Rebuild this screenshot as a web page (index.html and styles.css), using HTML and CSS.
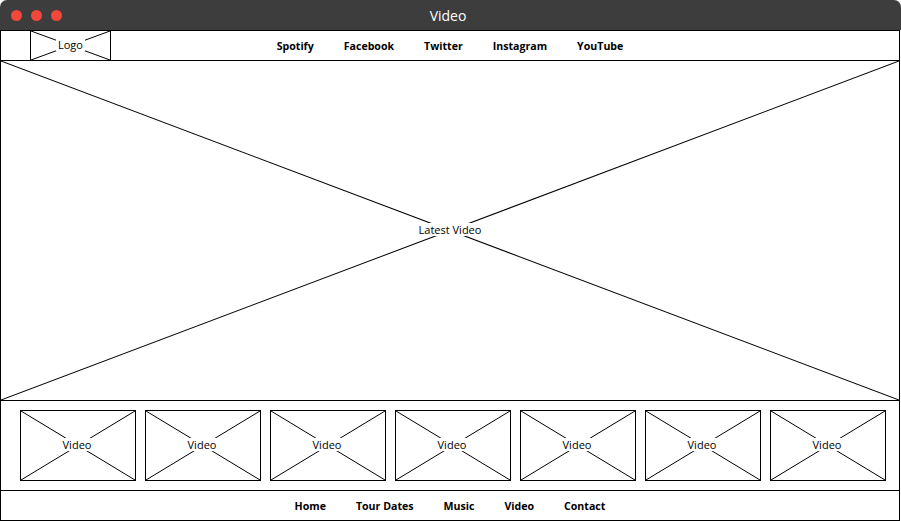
FILE: index.html
```html
<!doctype html>
<html lang="en">
<head>
	<meta charset="UTF-8">
	<title>Video</title>
	<link rel="stylesheet" href="styles.css">
</head>
<body>
<div class="titlebar">
	<div class="dots">
		<span class="dot"></span>
		<span class="dot"></span>
		<span class="dot"></span>
	</div>
	<p class="title">Video</p>
</div>
<div class="frame">
	<div class="header">
		<div class="ph logo">
			<svg class="cross" viewBox="0 0 100 100" preserveAspectRatio="none"><line x1="0" y1="0" x2="100" y2="100"/><line x1="100" y1="0" x2="0" y2="100"/></svg>
			<span class="label">Logo</span>
		</div>
		<div class="nav">
			<a>Spotify</a>
			<a>Facebook</a>
			<a>Twitter</a>
			<a>Instagram</a>
			<a>YouTube</a>
		</div>
	</div>
	<div class="ph hero">
		<svg class="cross" viewBox="0 0 100 100" preserveAspectRatio="none"><line x1="0" y1="0" x2="100" y2="100"/><line x1="100" y1="0" x2="0" y2="100"/></svg>
		<span class="label">Latest Video</span>
	</div>
	<div class="strip">
		<div class="ph thumb"><svg class="cross" viewBox="0 0 100 100" preserveAspectRatio="none"><line x1="0" y1="0" x2="100" y2="100"/><line x1="100" y1="0" x2="0" y2="100"/></svg><span class="label">Video</span></div>
		<div class="ph thumb"><svg class="cross" viewBox="0 0 100 100" preserveAspectRatio="none"><line x1="0" y1="0" x2="100" y2="100"/><line x1="100" y1="0" x2="0" y2="100"/></svg><span class="label">Video</span></div>
		<div class="ph thumb"><svg class="cross" viewBox="0 0 100 100" preserveAspectRatio="none"><line x1="0" y1="0" x2="100" y2="100"/><line x1="100" y1="0" x2="0" y2="100"/></svg><span class="label">Video</span></div>
		<div class="ph thumb"><svg class="cross" viewBox="0 0 100 100" preserveAspectRatio="none"><line x1="0" y1="0" x2="100" y2="100"/><line x1="100" y1="0" x2="0" y2="100"/></svg><span class="label">Video</span></div>
		<div class="ph thumb"><svg class="cross" viewBox="0 0 100 100" preserveAspectRatio="none"><line x1="0" y1="0" x2="100" y2="100"/><line x1="100" y1="0" x2="0" y2="100"/></svg><span class="label">Video</span></div>
		<div class="ph thumb"><svg class="cross" viewBox="0 0 100 100" preserveAspectRatio="none"><line x1="0" y1="0" x2="100" y2="100"/><line x1="100" y1="0" x2="0" y2="100"/></svg><span class="label">Video</span></div>
		<div class="ph thumb"><svg class="cross" viewBox="0 0 100 100" preserveAspectRatio="none"><line x1="0" y1="0" x2="100" y2="100"/><line x1="100" y1="0" x2="0" y2="100"/></svg><span class="label">Video</span></div>
	</div>
	<div class="footer">
		<div class="nav">
			<a>Home</a>
			<a>Tour Dates</a>
			<a>Music</a>
			<a>Video</a>
			<a>Contact</a>
		</div>
	</div>
</div>
</body>
</html>
```

FILE: styles.css
```css
*{
	box-sizing: border-box;
}
body{
	margin: 0;
	background: #fff;
	font-family: "Open Sans", "Noto Sans", sans-serif;
	color: #000;
}
.titlebar{
	height: 30px;
	background-color: #3d3d3d;
	border-radius: 7px 7px 0 0;
	display: grid;
	grid-template-columns: 1fr auto 1fr;
	align-items: center;
}
.dots{
	display: flex;
	gap: 9px;
	padding-left: 11px;
}
.dot{
	width: 11px;
	height: 11px;
	border-radius: 50%;
	background-color: #f2473a;
}
.title{
	margin: 0;
	color: #fff;
	font-size: 14px;
	padding-right: 5px;
}
.frame{
	width: 900px;
	border: 1px solid #000;
}
.header{
	height: 30px;
	border-bottom: 1px solid #000;
	display: grid;
	grid-template-columns: 1fr auto 1fr;
	align-items: center;
}
.nav{
	display: flex;
	gap: 30px;
	font-size: 10.6px;
	font-weight: bold;
}
.ph{
	position: relative;
	display: flex;
	justify-content: center;
	align-items: center;
}
.cross{
	position: absolute;
	left: 0;
	top: 0;
	width: 100%;
	height: 100%;
}
.cross line{
	stroke: #000;
	stroke-width: 1;
	vector-effect: non-scaling-stroke;
}
.label{
	position: relative;
	top: -1px;
	background: #fff;
	font-size: 11px;
	padding: 0 2px;
	line-height: 13px;
}
.logo{
	width: 81px;
	height: 31px;
	margin: -1px 0 -1px 29px;
	border: 1px solid #000;
	align-self: stretch;
}
.hero{
	height: 340px;
	border-bottom: 1px solid #000;
}
.strip{
	height: 90px;
	border-bottom: 1px solid #000;
	display: flex;
	gap: 9px;
	padding: 9px 0 0 19px;
}
.thumb{
	width: 116px;
	height: 71px;
	border: 1px solid #000;
}
.thumb .label{
	left: -1px;
}
.footer{
	height: 29px;
	display: flex;
	justify-content: center;
	align-items: center;
}
```
